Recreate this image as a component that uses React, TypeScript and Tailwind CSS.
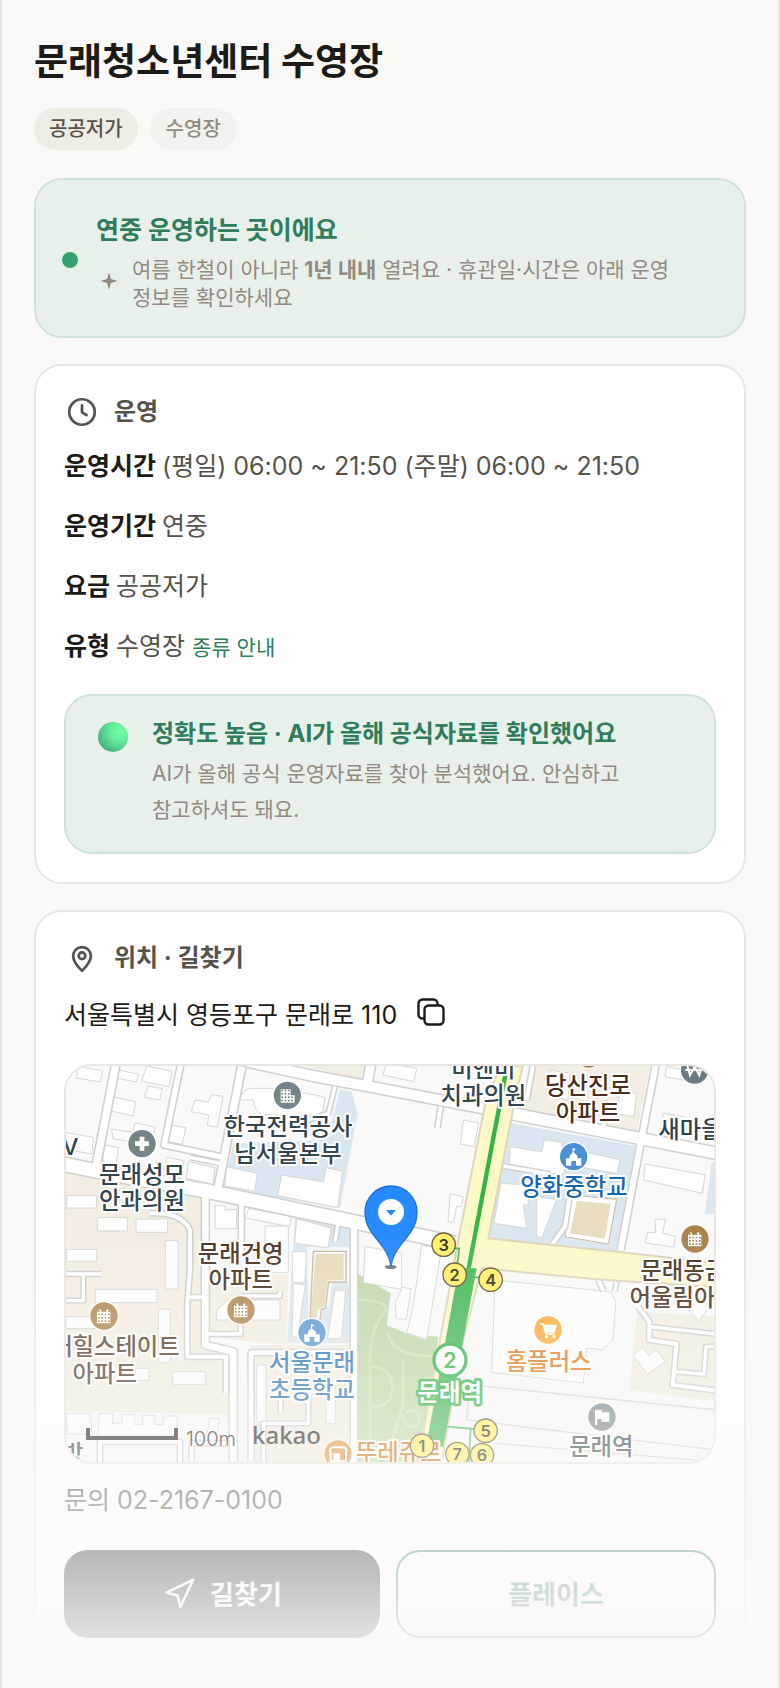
import type { ReactNode } from "react";
import { Navigation } from "lucide-react";

const FONT = "font-[Inter,'Noto_Sans_CJK_KR',sans-serif]";

const rows = [
  { label: "운영시간", value: "(평일) 06:00 ~ 21:50 (주말) 06:00 ~ 21:50" },
  { label: "운영기간", value: "연중" },
  { label: "요금", value: "공공저가" },
];

const ClockIcon = () => (
  <svg viewBox="0 0 24 24" className="size-9" fill="none" stroke="currentColor" strokeWidth="1.8" strokeLinecap="round" strokeLinejoin="round">
    <circle cx="12" cy="12" r="8.5" />
    <path d="M12 7.6V12.2l3 1.8" />
  </svg>
);

const PinIcon = () => (
  <svg viewBox="0 0 24 24" className="size-9" fill="none" stroke="currentColor" strokeWidth="1.8" strokeLinecap="round" strokeLinejoin="round">
    <path d="M12 20.6c-3-3-5.9-6.2-5.900-10a5.900 5.900 0 0 1 11.800 0c0 3.800-2.900 7-5.900 10z" />
    <circle cx="12" cy="10.5" r="2.2" />
  </svg>
);

const CopyIcon = () => (
  <svg viewBox="0 0 28 28" className="size-7" fill="none" stroke="currentColor" strokeWidth="2.4" strokeLinejoin="round">
    <rect x="7.5" y="7.5" width="19" height="19" rx="4" />
    <path d="M7.5 20.5H5.5a4 4 0 0 1-4-4V5.5a4 4 0 0 1 4-4h11a4 4 0 0 1 4 4v2" />
  </svg>
);

const Card = ({ icon, title, children }: { icon: ReactNode; title: string; children: ReactNode }) => (
  <section className="rounded-[28px] border-2 border-[#e9e7df] bg-white p-7">
    <h2 className="flex h-9 items-center gap-3.5 text-2xl font-bold text-[#57534a]">
      {icon}
      {title}
    </h2>
    {children}
  </section>
);

// Map units are a third of a pixel.
const Label = ({ x, y, lines, color }: { x: number; y: number; lines: string[]; color: string }) => (
  <text
    textAnchor="middle"
    fontSize="70"
    fontWeight="500"
    fill={color}
    stroke="#fff"
    strokeWidth="12"
    strokeLinejoin="round"
    paintOrder="stroke"
  >
    {lines.map((line, i) => (
      <tspan key={line} x={x} y={y + i * 79}>
        {line}
      </tspan>
    ))}
  </text>
);

const Marker = ({ x, y, color, children }: { x: number; y: number; color: string; children: ReactNode }) => (
  <g transform={`translate(${x} ${y})`}>
    <circle r="43" fill={color} stroke="#fff" strokeWidth="4" />
    {children}
  </g>
);

const Windows = ({ color }: { color: string }) => (
  <g fill={color}>
    {[-14, -4, 6, 16].map((y) =>
      [-15, -5, 5, 15].map((x) => <rect key={`${x}${y}`} x={x - 3} y={y - 3} width="5" height="5" />)
    )}
  </g>
);

const Apartment = ({ x, y, color }: { x: number; y: number; color: string }) => (
  <Marker x={x} y={y} color={color}>
    <path d="M-21 22v-34l9-9 8 8h6l8-8 9 9v34z" fill="#fff" />
    <Windows color={color} />
  </Marker>
);

const School = ({ x, y, color }: { x: number; y: number; color: string }) => (
  <Marker x={x} y={y} color={color}>
    <path d="M-23 27V5h11v-8L-3-13v-13l10 4-7 4v5L11-3v8h12v22H7V13H-7v14z" fill="#fff" />
  </Marker>
);

const Exit = ({ x, y, n }: { x: number; y: number; n: number }) => (
  <g>
    <circle cx={x} cy={y} r="35" fill="#fff06a" stroke="#6b5638" strokeWidth="4" />
    <text x={x} y={y + 18} textAnchor="middle" fontSize="49" fontWeight="600" fill="#3a3020">
      {n}
    </text>
  </g>
);

const roads = [
  { d: "M20 338L150 365L480 425L910 515L1215 580", w: 40 },
  { d: "M200 30L138 350", w: 22 },
  { d: "M395 30L342 285L520 322", w: 16 },
  { d: "M420 322L520 342", w: 10 },
  { d: "M575 50L505 410", w: 22 },
  { d: "M570 30L790 78L960 110L1300 175", w: 30 },
  { d: "M965 30L952 100", w: 26 },
  { d: "M855 110L835 190L760 215", w: 10 },
  { d: "M466 430V885L550 905V1236", w: 20 },
  { d: "M300 490q95-5 120 50V660L412 760V920H528V1030", w: 12 },
  { d: "M420 742H460", w: 12 },
  { d: "M574 455V600", w: 14 },
  { d: "M575 738H690V725", w: 10 },
  { d: "M475 852H572V822", w: 10 },
  { d: "M865 515L855 575", w: 10 },
  { d: "M912 530V1236", w: 18 },
  { d: "M603 1236V908H900", w: 14 },
  { d: "M48 672H155", w: 10 },
  { d: "M100 672V752H48", w: 10 },
  { d: "M692 1030V1090", w: 10 },
  { d: "M640 1236V1120H775V1050", w: 10 },
  { d: "M150 1236V1175H390V1236", w: 12 },
  { d: "M425 1236V1180H530", w: 12 },
  { d: "M1380 190L2000 310", w: 34 },
  { d: "M1820 30L1770 290L1712 600", w: 18 },
  { d: "M1360 348L1500 372", w: 10 },
  { d: "M1505 585L1545 530L1565 400", w: 12 },
  { d: "M1660 230L1672 170", w: 12 },
  { d: "M1450 40L1430 150", w: 12 },
  { d: "M1172 170L1162 235", w: 12 },
  { d: "M1765 770L1798 815V870L1880 882L1868 1005L2000 1022", w: 12 },
  { d: "M1798 830L2000 852", w: 10 },
  { d: "M1875 965L1962 972L1968 890H2000", w: 10 },
  { d: "M1645 690L1660 722", w: 12 },
  { d: "M1700 695L1694 725", w: 10 },
];

const buildings = [
  "M85 50l72 12-6 34-72-12z",
  "M205 60l60 12-6 24-60-12z",
  "M290 48l75 16-6 46-84-16z",
  "M295 108l42 8-8 34-46-8z",
  "M188 140l70 16-10 42-68-16z",
  "M255 218l60 14-8 34-58-14z",
  "M185 238l62 8-6 28-52-8z",
  "M48 248l82 14-4 50-78-14z",
  "M165 285l40 8-6 50-42-8z",
  "M435 150l40 6 10-22 34 5-17 92-30-4 4-32-52-10z",
  "M365 225l42 8-10 50-42-8z",
  "M350 322l52 10-4 38-55-10z",
  "M415 335l80 18-6 50-80-18z",
  "M570 150q5-35 40-35h75l110 20 30 8-8 50-90 5-90-5q-24-10-27-43z",
  "M530 350l92 20-8 54-90-16z",
  "M695 375l125 20 8-42 50 10-15 110-180-36z",
  "M495 466l30 2 1 12 34-2v58h-65z",
  "M596 474l128 26-5 30-132-26z",
  "M645 528h70v140h-70z",
  "M740 506l104 28-10 60-100-15z",
  "M726 605h44l-6 92h-36z",
  "M730 700l36 5-24 155h-16z",
  "M855 720l32 2-12 144h-42z",
  "M50 436h90v38H50z",
  "M142 503h90v40h-90z",
  "M258 507h95v40h-95z",
  "M50 598h90v36H50z",
  "M346 572h38v145h-38z",
  "M136 718h185v40H136z",
  "M48 800h90v36H48z",
  "M325 778h36v160h-36z",
  "M500 780l35-30h155v60H500z",
  "M368 965h98v38h-98z",
  "M48 1090h72l6 62H52z",
  "M148 1090l40 2v28h28v-26h38v30h24v-28h36v28h26v-26h42l-2 60H144z",
  "M478 1106h30l-6 44h-30z",
  "M225 955h72v36h-72z",
  "M620 945h28v170h-28z",
  "M828 1010h28v110h-28z",
  "M945 590l110 18v110l-115-20z",
  "M1240 210l46 8-14 72-40-8z",
  "M1200 432l40 8-6 30-14-2-10 50-16-4z",
  "M1035 760l22-48 26 4-14 92-30-2z",
  "M1115 585l60 10-45 275-60-22 20-80z",
  "M1380 290l95 15 8-36 52 8 10 90-12 8-155-32z",
  "M1600 305l110 24-8 42-100-18z",
  "M1352 400l84 5-2 60h-14l10 70-98-15z",
  "M1460 440l60 8-45 118-15-10z",
  "M1785 342l180 32-8 56-176-40z",
  "M1815 508h32l-10 42 40 10-6 32-86-14 8-30h24z",
  "M1750 915l26-24 20 26 22-18 28 36-54 38z",
  "M1910 770l36-30 34 28-34 46z",
  "M1335 690l345 35 18 30-10 115-30 30-48-6-10 105-275-32z",
  "M1840 190l60 10-4 40-62-10z",
  "M1850 50l110 20-5 30-110-20z",
  "M1500 60l60 10-6 80-62-12z",
  "M1710 120l50 10-8 70-50-8z",
  "M1010 40l90 15-8 40-94-20z",
];

const AreaMap = () => (
  <div className="mt-7 overflow-hidden rounded-[28px] border-2 border-[#e9e6df]">
    <svg viewBox="48 48 1944 1188" className="block w-full" role="img" aria-label="문래청소년센터 주변 지도">
      <rect x="48" y="48" width="1944" height="1188" fill="#f9f9f9" />

      <g fill="#f4ede1">
        <path d="M48 358L455 440V870L550 905V1095L48 1083z" />
        <path d="M600 670L715 675L710 885L465 860V650z" />
        <path d="M600 885H905V1236H600z" />
        <path d="M770 48H945V95z" />
        <path d="M1440 48H1800L1760 250L1400 180z" />
        <path d="M1762 785L2000 800V1055L1738 1020z" />
      </g>
      <g fill="#dbe7f0">
        <path d="M870 118L905 125L923 190L870 475L520 415L550 280L830 270z" />
        <path d="M735 495L905 530L900 880H712z" />
        <path d="M1385 220L1770 290L1705 605L1315 565z" />
        <path d="M2000 335V495L1965 490L1985 335z" />
      </g>
      <path d="M920 670L1022 730L1010 825L1068 850L1165 860L1115 1240H908z" fill="#c0d9ad" />
      <g fill="none" stroke="#d0e3c1" strokeWidth="8">
        <path d="M920 750q90 0 90 30q-60 60-50 200v200" />
        <path d="M1015 850q10 70 145 70M955 950q70 0 72 60t-62 60M1060 930v130l-40 130" />
        <circle cx="1085" cy="1105" r="24" />
      </g>

      <path d="M770 590h128v108h-52l-8 70-20 8-4 32h-38z" fill="#fff" opacity=".7" />
      <path d="M797 612h84v78h-48l-10 78-20 10-4 30h-18z" fill="#e6dcb9" />
      <path d="M790 604h98v92h-52l-10 78-12 4-4 32M790 604l-10 206" fill="none" stroke="#cdb59c" strokeWidth="4" />

      <g fill="#fdfdfd" stroke="#d6d6d6" strokeWidth="3">
        {buildings.map((d) => (
          <path key={d} d={d} />
        ))}
      </g>
      <path d="M1575 445L1690 455L1670 575L1552 555z" fill="#e7ddbf" stroke="#fff" strokeWidth="14" />
      <path d="M1565 435L1700 448L1675 582L1545 560z" fill="none" stroke="#cdb59c" strokeWidth="3" />

      <g fill="none" stroke="#cfcfcf" strokeLinejoin="round">
        {roads.map(({ d, w }) => (
          <path key={d} d={d} strokeWidth={w + 9} />
        ))}
      </g>
      <g fill="none" stroke="#fff" strokeLinejoin="round">
        {roads.map(({ d, w }) => (
          <path key={d} d={d} strokeWidth={w} />
        ))}
      </g>
      <g fill="none" stroke="#d4d4d4" strokeWidth="4">
        <path d="M1220 1000L2000 1080M1255 1050L1250 1110L2000 1200M1340 1180L2000 1236" />
      </g>

      <path
        d="M1350 48H1418L1390 175L1315 565L1710 606L2000 640V712L1640 688L1295 655L1240 870L1175 1236H1105L1170 870L1225 570L1305 165z"
        fill="#fdf8c8"
        stroke="#ddd5bd"
        strokeWidth="6"
      />
      <path d="M1371 48L1255 660" stroke="#34b44a" strokeWidth="13" />
      <path d="M1226 655H1280L1180 1190H1128z" fill="#45b957" />
      <path d="M1215 595H1228L1222 640M1270 682H1300M1190 1130L1290 1138M1262 1138L1256 1236" fill="none" stroke="#45b957" strokeWidth="5" />

      <Marker x={712} y={136} color="#75848b">
        <path d="M-20 22v-40h30v18h12v22z" fill="#fff" />
        <Windows color="#75848b" />
      </Marker>
      <Marker x={276} y={281} color="#75848b">
        <path d="M-7-21H7v14h14V7H7v14H-7V7h-14V-7h14z" fill="#fff" />
      </Marker>
      <Marker x={1934} y={60} color="#6d7c84">
        <path d="M-22-14l8 30L0-10l14 26 8-30M-28 0h56" fill="none" stroke="#fff" strokeWidth="6" />
      </Marker>
      <Marker x={1616} y={12} color="#a67c45">{null}</Marker>
      <Apartment x={162} y={798} color="#b18a55" />
      <Apartment x={573} y={780} color="#b18a55" />
      <Apartment x={1935} y={567} color="#a9814c" />
      <School x={786} y={848} color="#5e9bd2" />
      <School x={1571} y={320} color="#4a90d2" />
      <Marker x={1494} y={840} color="#ffac3c">
        <path d="M-24-18h9l9 30h25" fill="none" stroke="#fff" strokeWidth="5" />
        <path d="M-14-16h41L20 8H-7z" fill="#fff" />
        <circle cx="-4" cy="20" r="5" fill="#fff" />
        <circle cx="18" cy="20" r="5" fill="#fff" />
      </Marker>
      <Marker x={1656} y={1101} color="#7b8990">
        <path d="M-21 24v-46h21v8h22v28H-2v-8h-12v18z" fill="#fff" />
      </Marker>
      <Marker x={864} y={1212} color="#dd9544">
        <path d="M-22 22v-26q-6-16 10-16h26q16 0 10 16v26z" fill="none" stroke="#fff" strokeWidth="6" />
        <path d="M-14 20v-22h20v22z" fill="#fff" />
      </Marker>

      <Label x={714} y={256} lines={["한국전력공사", "남서울본부"]} color="#33454d" />
      <Label x={276} y={399} lines={["문래성모", "안과의원"]} color="#33454d" />
      <Label x={38} y={315} lines={["TV"]} color="#33454d" />
      <Label x={572} y={635} lines={["문래건영", "아파트"]} color="#4b3322" />
      <Label x={164} y={916} lines={["문래힐스테이트", "아파트"]} color="#5a4130" />
      <Label x={786} y={964} lines={["서울문래", "초등학교"]} color="#2e78bb" />
      <Label x={1300} y={82} lines={["미앤미", "치과의원"]} color="#33454d" />
      <Label x={1614} y={133} lines={["당산진로", "아파트"]} color="#4b2f1c" />
      <Label x={1986} y={264} lines={["새마을금고"]} color="#33454d" />
      <Label x={1572} y={436} lines={["양화중학교"]} color="#1765b5" />
      <Label x={1932} y={688} lines={["문래동금호", "어울림아파트"]} color="#4b3322" />
      <Label x={1496} y={959} lines={["홈플러스"]} color="#e07b20" />
      <Label x={1654} y={1216} lines={["문래역"]} color="#33454d" />
      <Label x={36} y={1236} lines={["다방"]} color="#33454d" />
      <Label x={1046} y={1234} lines={["뚜레쥬르"]} color="#cf7413" />

      <Exit x={1181} y={584} n={3} />
      <Exit x={1214} y={674} n={2} />
      <Exit x={1322} y={689} n={4} />
      <Exit x={1307} y={1142} n={5} />
      <Exit x={1116} y={1187} n={1} />
      <Exit x={1222} y={1212} n={7} />
      <Exit x={1296} y={1216} n={6} />

      <circle cx="1200" cy="930" r="48" fill="#fff" stroke="#37b54c" strokeWidth="10" />
      <text x="1200" y="953" textAnchor="middle" fontSize="64" fontWeight="600" fill="#37b54c">
        2
      </text>
      <text
        x="1199"
        y="1052"
        textAnchor="middle"
        fontSize="70"
        fontWeight="700"
        fill="#fff"
        stroke="#37b54c"
        strokeWidth="16"
        strokeLinejoin="round"
        paintOrder="stroke"
      >
        문래역
      </text>

      <ellipse cx="1022" cy="651" rx="18" ry="6" fill="#777" />
      <path d="M1023 650C1016 580 945 560 945 486a78 78 0 0 1 156 0C1101 560 1030 580 1023 650z" fill="#258bff" stroke="#1c6fd6" strokeWidth="4" />
      <circle cx="1023" cy="486" r="39" fill="#fff" />
      <path d="M1008 480H1038L1023 497z" fill="#258bff" />

      <path d="M114 1134V1164H378V1134" fill="none" stroke="#222" strokeWidth="12" />
      <text x="408" y="1188" fontSize="60" fontWeight="300" fill="#222">
        100m
      </text>
      <text x="606" y="1182" fontSize="72" fontWeight="500" fill="#222" className="font-['Noto_Sans',sans-serif]">
        kakao
      </text>
    </svg>
  </div>
);

export default function App() {
  return (
    <main
      className={`relative flex min-h-screen flex-col break-keep border-x-2 border-[#e9e7df] bg-[#faf9f5] px-8 pt-9 pb-5 text-[#1c1b17] ${FONT}`}
    >
      <h1 className="text-[37px] leading-[52px] font-bold">문래청소년센터 수영장</h1>
      <div className="mt-5 flex gap-3 text-xl font-medium">
        <span className="flex h-[42px] items-center rounded-full bg-[#efece4] px-[15px] text-[#57534a]">공공저가</span>
        <span className="flex h-[42px] items-center rounded-full bg-[#f3f2ec] px-4 text-[#928b7e]">수영장</span>
      </div>

      <section className="mt-7 flex items-center gap-[18px] rounded-[28px] border-2 border-[#cfe4d8] bg-[#e8f0ea] px-[26px] pt-7 pb-6">
        <span className="size-4 shrink-0 rounded-full bg-[#36a26c]" />
        <div>
          <h2 className="text-[25px] leading-11 font-bold text-[#2f7d5b]">연중 운영하는 곳이에요</h2>
          <div className="mt-1 flex items-start gap-3.5 pl-1 text-[#928b7e]">
            <svg viewBox="0 0 18 18" className="mt-4 size-[18px] shrink-0" fill="currentColor">
              <path d="M9 .5L11 7L17.5 9L11 11L9 17.5L7 11L.5 9L7 7z" />
            </svg>
            <p className="text-[21px] leading-7">
              여름 한철이 아니라 <b className="font-bold">1년 내내</b> 열려요 · 휴관일·시간은 아래 운영 정보를 확인하세요
            </p>
          </div>
        </div>
      </section>

      <div className="mt-[26px] flex flex-col gap-[26px]">
        <Card icon={<ClockIcon />} title="운영">
          <dl className="mt-4 flex flex-col gap-5 text-[25px] leading-10 text-[#57534a]">
            {rows.map(({ label, value }) => (
              <div key={label} className="flex gap-1.5">
                <dt className="font-bold text-[#1c1b17]">{label}</dt>
                <dd>{value}</dd>
              </div>
            ))}
            <div className="flex gap-1.5">
              <dt className="font-bold text-[#1c1b17]">유형</dt>
              <dd>
                수영장{" "}
                <a href="#types" className="text-[21px] leading-none text-[#2f7d5b]">
                  종류 안내
                </a>
              </dd>
            </div>
          </dl>
          <div className="mt-7 flex gap-6 rounded-[28px] border-2 border-[#cfe4d8] bg-[#e8f0ea] px-8 pt-5 pb-6">
            <span className="mt-1.5 size-[30px] shrink-0 rounded-full bg-[radial-gradient(circle_at_72%_32%,#74ffa6_0%,#62ea98_35%,#49b884_72%,#5a8f98_100%)]" />
            <div>
              <h3 className="text-2xl leading-9 font-bold text-[#2f7d5b]">정확도 높음 · AI가 올해 공식자료를 확인했어요</h3>
              <p className="mt-1 max-w-[490px] text-[21px] leading-9 text-[#928b7e]">
                AI가 올해 공식 운영자료를 찾아 분석했어요. 안심하고 참고하셔도 돼요.
              </p>
            </div>
          </div>
        </Card>

        <Card icon={<PinIcon />} title="위치 · 길찾기">
          <div className="mt-5 flex h-10 items-center gap-5 text-[25px]">
            <span>서울특별시 영등포구 문래로 110</span>
            <button type="button" aria-label="주소 복사" className="pb-2">
              <CopyIcon />
            </button>
          </div>
          <AreaMap />
          <p className="mt-4 text-[25px] leading-10 text-[#57534a]">문의 02-2167-0100</p>
          <div className="mt-[30px] flex gap-4 text-[26px] font-bold">
            <button type="button" className="flex h-22 flex-1 items-center justify-center gap-3.5 rounded-3xl bg-[#1c1b17] text-white">
              <Navigation size={34} strokeWidth={1.8} />
              길찾기
            </button>
            <button type="button" className="h-22 flex-1 rounded-3xl border-2 border-[#2f7d5b] bg-white text-[#2f7d5b]">
              플레이스
            </button>
          </div>
        </Card>
      </div>

      <div className="pointer-events-none absolute inset-x-0 bottom-0 h-[462px] bg-linear-to-b from-[#faf9f5]/0 to-[#faf9f5]" />
    </main>
  );
}
